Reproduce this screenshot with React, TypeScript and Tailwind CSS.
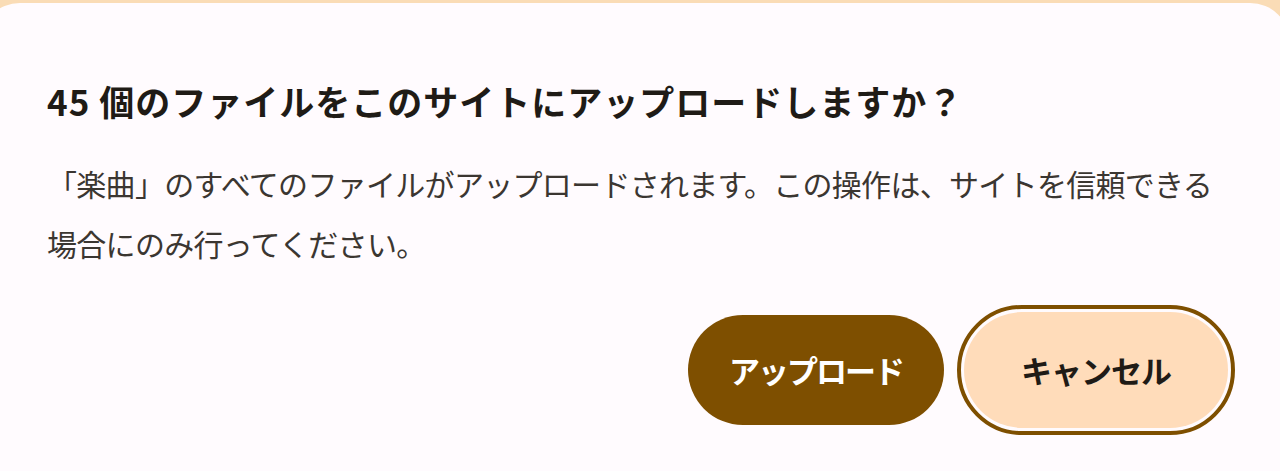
const App: React.FC = () => {
  return (
    <div className="h-[471px] w-[1280px] overflow-hidden bg-[#fadcb6] font-['Noto_Sans_CJK_JP','Noto_Sans',sans-serif]">
      <div className="mt-[3px] ml-[-20px] h-[520px] w-[1310px] rounded-[40px] bg-[#fffbfe] pt-[76px] pl-[67px] pr-[62px]">
        <h2 className="text-[35px] leading-[44px] font-bold tracking-[1px] text-[#1f1b16]">
          45 個のファイルをこのサイトにアップロードしますか？
        </h2>
        <p className="mt-[30px] w-[1180px] text-[30px] leading-[60px] tracking-[-0.7px] text-[#3b3631]">
          「楽曲」のすべてのファイルがアップロードされます。この操作は、サイトを信頼できる場合にのみ行ってください。
        </p>
        <div className="mt-[39px] flex items-center justify-end gap-[20px]">
          <button className="h-[110px] w-[256px] rounded-full bg-[#7e4f00] text-[31px] font-bold tracking-[-2px] text-white">
            アップロード
          </button>
          <button className="h-[116px] w-[264px] rounded-full bg-[#ffdcba] text-[31px] font-bold tracking-[-1px] text-[#1f1b16] outline-4 outline-offset-[3px] outline-[#7e4f00]">
            キャンセル
          </button>
        </div>
      </div>
    </div>
  );
};

export default App;
